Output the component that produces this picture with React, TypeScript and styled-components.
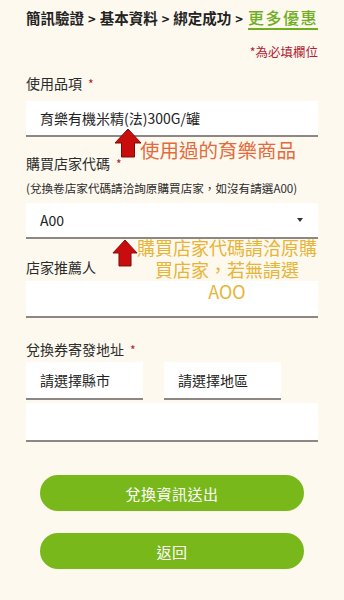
import React from 'react';
import styled, { createGlobalStyle } from 'styled-components';

const GlobalStyle = createGlobalStyle`
  html, body {
    margin: 0;
    padding: 0;
    background: #fdf9ef;
  }
  body {
    font-family: "Noto Sans CJK TC", "Noto Sans", sans-serif;
    color: #2b2b2b;
  }
`;

const Page = styled.div`
  position: relative;
  width: 344px;
  min-height: 600px;
  box-sizing: border-box;
  padding: 6px 26px 0;
  background: #fdf9ef;
`;

const Breadcrumb = styled.div`
  display: flex;
  align-items: flex-end;
  justify-content: space-between;
  height: 24px;
  line-height: 22px;
  color: #222;
  white-space: nowrap;
`;

const Crumb = styled.span<{ $active?: boolean }>`
  display: inline-block;
  color: ${(p) => (p.$active ? '#6fae1f' : '#222')};
  font-size: ${(p) => (p.$active ? '16px' : '14.5px')};
  font-weight: ${(p) => (p.$active ? 500 : 700)};
  border-bottom: ${(p) => (p.$active ? '2px solid #6fae1f' : 'none')};
  letter-spacing: ${(p) => (p.$active ? '1.5px' : '0')};
`;

const Sep = styled.span`
  font-size: 13px;
  font-weight: 700;
  margin: 0 4px;
`;

const RequiredNote = styled.div`
  margin-top: 13px;
  text-align: right;
  font-size: 12.5px;
  line-height: 17px;
  color: #b3202f;
`;

const Label = styled.div<{ $mt: number }>`
  margin-top: ${(p) => p.$mt}px;
  font-size: 14px;
  line-height: 20px;
  color: #2b2b2b;
`;

const Star = styled.span`
  color: #b3202f;
  margin-left: 6px;
  font-size: 12px;
`;

const Hint = styled.div`
  margin-top: 6px;
  font-size: 11.6px;
  line-height: 16px;
  color: #2b2b2b;
  white-space: nowrap;
`;

const Box = styled.div<{ $mt: number; $h?: number; $w?: number }>`
  display: flex;
  align-items: center;
  justify-content: space-between;
  box-sizing: border-box;
  margin-top: ${(p) => p.$mt}px;
  height: ${(p) => (p.$h ?? 34) + 2}px;
  width: ${(p) => (p.$w ? `${p.$w}px` : 'auto')};
  padding: 0 15px 0 14px;
  background: #fff;
  border-bottom: 2px solid #8c8782;
  font-size: 14px;
  color: #222;
`;

const Caret = styled.span`
  width: 0;
  height: 0;
  border-left: 3.5px solid transparent;
  border-right: 3.5px solid transparent;
  border-top: 4px solid #333;
`;

const Row = styled.div`
  display: flex;
  gap: 21px;
  margin-top: 2px;
`;

const Buttons = styled.div`
  display: flex;
  flex-direction: column;
  gap: 22px;
  margin-top: 33px;
  padding: 0 14px;
`;

const PillButton = styled.button`
  height: 36px;
  border: none;
  border-radius: 18px;
  background: #79b81b;
  color: #fff;
  font-family: inherit;
  font-size: 15px;
  letter-spacing: 0.5px;
  cursor: pointer;
`;

const Callout = styled.div<{ $top: number; $left: number }>`
  position: absolute;
  top: ${(p) => p.$top}px;
  left: ${(p) => p.$left}px;
  pointer-events: none;
`;

const CalloutText = styled.div<{ $color: string; $size: number }>`
  color: ${(p) => p.$color};
  font-size: ${(p) => p.$size}px;
  line-height: 22px;
  text-align: center;
  white-space: nowrap;
`;

const UpArrow = ({ w, h }: { w: number; h: number }) => (
  <svg width={w} height={h} viewBox="0 0 28 30">
    <path
      d="M14 1 L27 15 L20.5 15 L20.5 29 L7.5 29 L7.5 15 L1 15 Z"
      fill="#c90d0d"
      stroke="#7a0a0a"
      strokeWidth="1"
      strokeLinejoin="miter"
    />
  </svg>
);

export default function App() {
  return (
    <>
      <GlobalStyle />
      <Page>
        <Breadcrumb>
          <span>
            <Crumb>簡訊驗證</Crumb>
            <Sep>&gt;</Sep>
            <Crumb>基本資料</Crumb>
            <Sep>&gt;</Sep>
            <Crumb>綁定成功</Crumb>
            <Sep>&gt;</Sep>
          </span>
          <Crumb $active>更多優惠</Crumb>
        </Breadcrumb>
        <RequiredNote>*為必填欄位</RequiredNote>

        <Label $mt={13}>
          使用品項<Star>*</Star>
        </Label>
        <Box $mt={7}>育樂有機米精(法)300G/罐</Box>

        <Label $mt={16}>
          購買店家代碼<Star>*</Star>
        </Label>
        <Hint>(兌換卷店家代碼請洽詢原購買店家，如沒有請選A00)</Hint>
        <Box $mt={7}>
          <span>A00</span>
          <Caret />
        </Box>

        <Label $mt={18}>店家推薦人</Label>
        <Box $mt={4} $h={35} />

        <Label $mt={21}>
          兌換券寄發地址<Star>*</Star>
        </Label>
        <Row>
          <Box $mt={0} $w={117} $h={36}>請選擇縣市</Box>
          <Box $mt={0} $w={117} $h={36}>請選擇地區</Box>
        </Row>
        <Box $mt={3} $h={37} />

        <Buttons>
          <PillButton>兌換資訊送出</PillButton>
          <PillButton>返回</PillButton>
        </Buttons>

        <Callout $top={128} $left={114}>
          <UpArrow w={28} h={30} />
        </Callout>
        <Callout $top={139} $left={140}>
          <CalloutText $color="#e46a3b" $size={19.5}>使用過的育樂商品</CalloutText>
        </Callout>

        <Callout $top={238} $left={112}>
          <UpArrow w={26} h={30} />
        </Callout>
        <Callout $top={236} $left={137}>
          <CalloutText $color="#e8b436" $size={18}>
            購買店家代碼請洽原購
            <br />
            買店家，若無請選
            <br />
            AOO
          </CalloutText>
        </Callout>
      </Page>
    </>
  );
}
